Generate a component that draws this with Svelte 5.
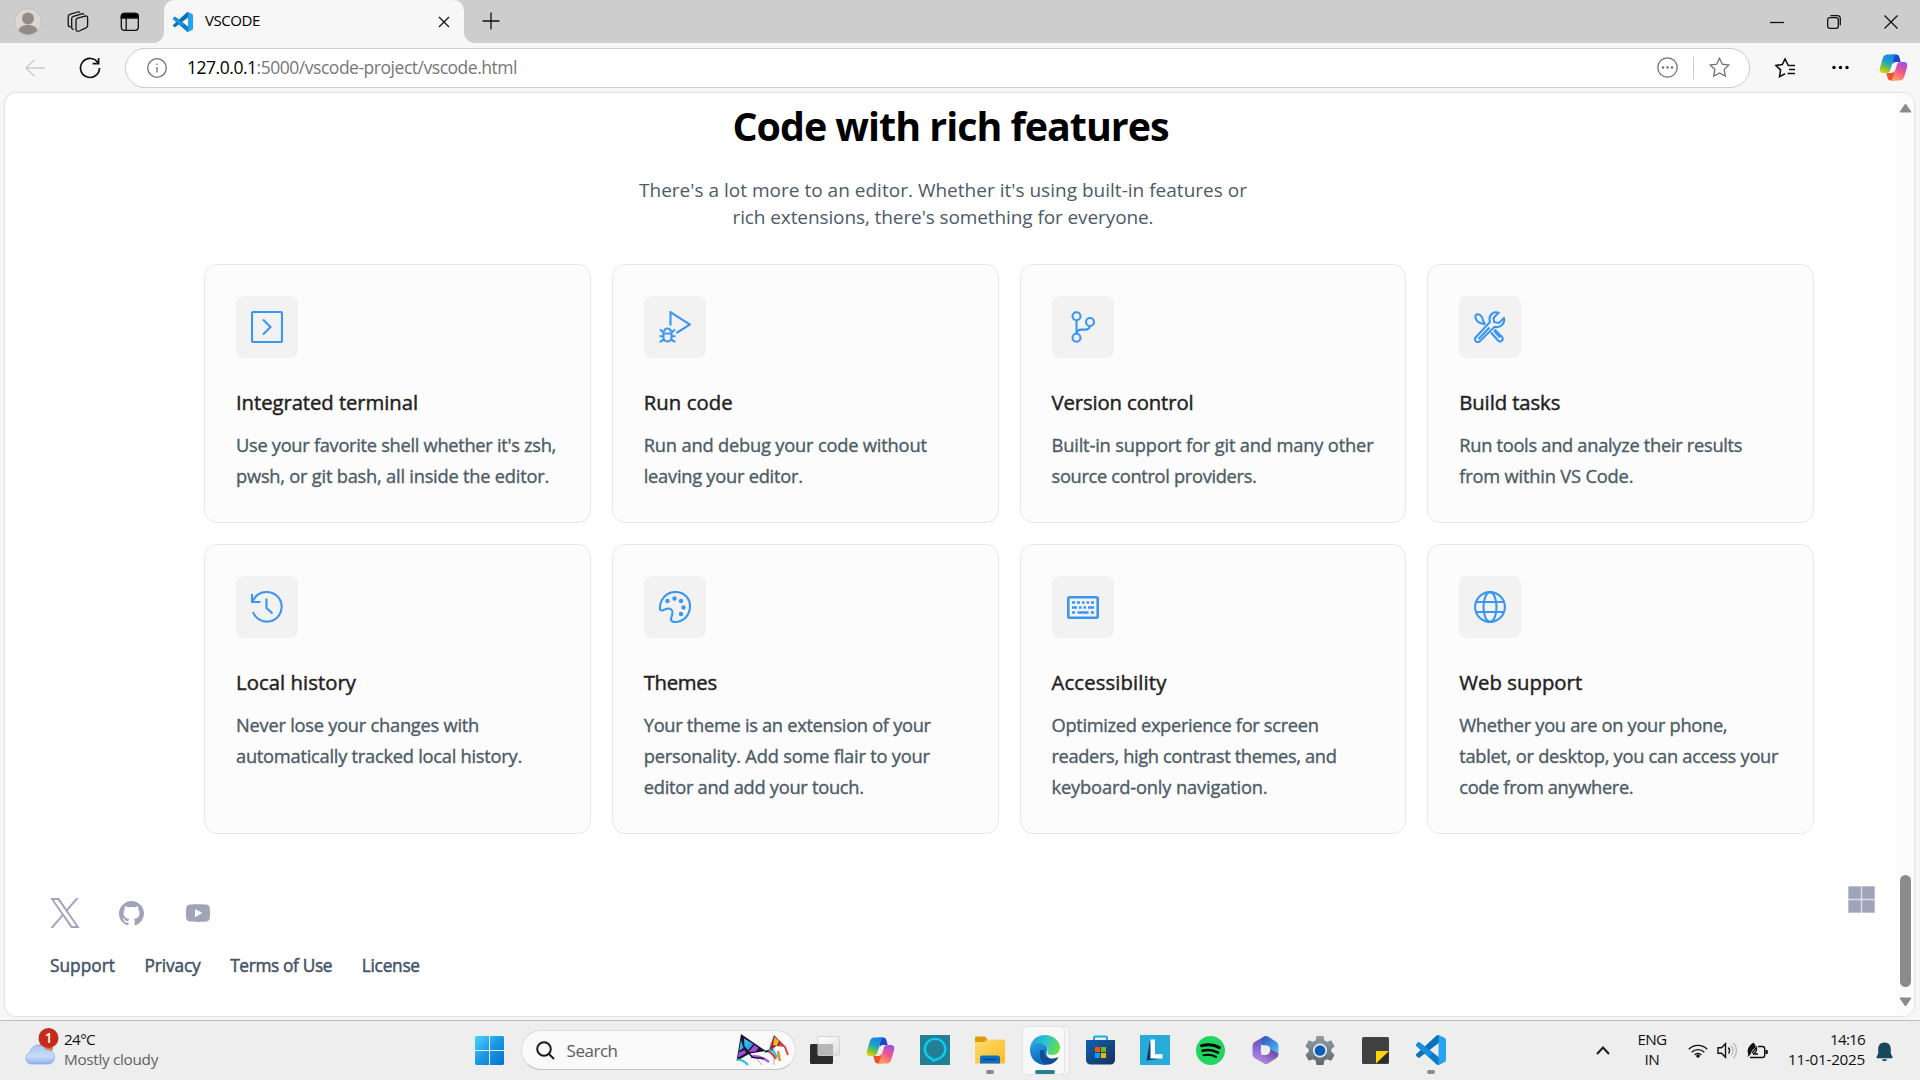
<script>
  // Spreads or tightens the letters of a label until it is `width` px wide.
  function fit(node, width) {
    const range = document.createRange();
    range.selectNodeContents(node);
    const natural = range.getBoundingClientRect().width;
    const gap = (width - natural) / node.textContent.length;
    node.style.letterSpacing = gap.toFixed(3) + 'px';
  }

  const features = [
    { icon: 'terminal', title: ['Integrated terminal', 182], lines: [["Use your favorite shell whether it's zsh,", 320], ['pwsh, or git bash, all inside the editor.', 313]] },
    { icon: 'debug', title: ['Run code', 89], lines: [['Run and debug your code without', 283], ['leaving your editor.', 159]] },
    { icon: 'branch', title: ['Version control', 142], lines: [['Built-in support for git and many other', 322], ['source control providers.', 205]] },
    { icon: 'tools', title: ['Build tasks', 101], lines: [['Run tools and analyze their results', 283], ['from within VS Code.', 174]] },
    { icon: 'history', title: ['Local history', 120], lines: [['Never lose your changes with', 243], ['automatically tracked local history.', 286]] },
    { icon: 'palette', title: ['Themes', 73], lines: [['Your theme is an extension of your', 287], ['personality. Add some flair to your', 286], ['editor and add your touch.', 220]] },
    { icon: 'keyboard', title: ['Accessibility', 115], lines: [['Optimized experience for screen', 267], ['readers, high contrast themes, and', 285], ['keyboard-only navigation.', 216]] },
    { icon: 'globe', title: ['Web support', 123], lines: [['Whether you are on your phone,', 268], ['tablet, or desktop, you can access your', 319], ['code from anywhere.', 174]] }
  ];

  const links = [['Support', 65], ['Privacy', 56], ['Terms of Use', 102], ['License', 58]];
</script>

{#snippet vscode(size)}
  <svg width={size} height={size} viewBox="0 0 100 100">
    <path fill="#0b7cc4" d="M96.46 89.2 75.86 99.12C73.47 100.27 70.62 99.79 68.75 97.92L1.3 36.42C-.52 34.76-.51 31.9 1.3 30.25L6.81 25.25C8.3 23.9 10.53 23.8 12.13 25L93.36 86.63C96.09 88.7 100 86.75 100 83.33V83.57C100 85.97 98.62 88.16 96.46 89.2Z" />
    <path fill="#0872b8" d="M96.46 10.8 75.86.88C73.47-.27 70.62.21 68.75 2.08L1.3 63.58C-.52 65.24-.51 68.1 1.3 69.75L6.81 74.75C8.3 76.1 10.53 76.2 12.13 75L93.36 13.37C96.09 11.3 100 13.25 100 16.67V16.43C100 14.03 98.62 11.84 96.46 10.8Z" />
    <path fill="#1b8fdc" d="M1.3 36.42C-.52 34.76-.51 31.9 1.3 30.25L6.81 25.25C8.3 23.9 10.53 23.8 12.13 25L58 60 42 73.5Z" />
    <path fill="#24a3f2" d="M75.86 99.13C73.47 100.27 70.62 99.79 68.75 97.92 71.06 100.22 75 98.59 75 95.33V4.67C75 1.41 71.06-.22 68.75 2.08 70.62.21 73.47-.27 75.86.87L96.46 10.78C98.62 11.82 100 14 100 16.41V83.59C100 86 98.62 88.18 96.46 89.22Z" />
  </svg>
{/snippet}

{#snippet copilot(id)}
  <svg width="29" height="27" viewBox="0 0 29 27">
    <defs>
      <linearGradient id="{id}a" x1="0.6" y1="0" x2="0.2" y2="1">
        <stop offset="0" stop-color="#1784e8" /><stop offset=".4" stop-color="#1aa2c9" /><stop offset=".7" stop-color="#6fc04b" /><stop offset="1" stop-color="#f5d000" />
      </linearGradient>
      <linearGradient id="{id}b" x1="0.8" y1="0" x2="0.3" y2="1">
        <stop offset="0" stop-color="#9a4df2" /><stop offset=".5" stop-color="#f0568c" /><stop offset="1" stop-color="#ffa45e" />
      </linearGradient>
    </defs>
    <path fill="#1d46cf" d="M13 .5h4.200c1.800 0 2.700 1 3.200 2.700l1.300 4.800h-5c-1.800 0-2.500 1-3 2.400z" />
    <path fill="#f0512b" d="M16 26.500h-4.200c-1.800 0-2.700-1-3.200-2.700l-1.300-4.800h5c1.800 0 2.500-1 3-2.400z" />
    <path fill="url(#{id}a)" d="M8.500.5h9.300c-1.500.3-2.200 1.400-2.700 3l-3.900 12.600c-.6 2-1.700 2.900-3.700 2.900H4.300C1 19 .2 16.600 1 13.500L3.700 4.400C4.500 1.800 5.900.5 8.500.5z" />
    <path fill="url(#{id}b)" d="M20.500 26.500h-9.300c1.500-.3 2.200-1.400 2.700-3l3.900-12.600c.6-2 1.700-2.900 3.700-2.900h3.200c3.300 0 4.100 2.400 3.300 5.500l-2.700 9.100c-.8 2.600-2.200 3.900-4.800 3.900z" />
  </svg>
{/snippet}

{#snippet featureIcon(name)}
  <svg class="line" width="32" height="32" viewBox="0 0 32 32">
    {#if name === 'terminal'}
      <rect x="1" y="1" width="30" height="30" rx="1.500" /><path d="M12 8.500 19.500 16 12 23.500" />
    {:else if name === 'debug'}
      <path d="M11.500 14.500V1.200L31 13.500 17.500 22" />
      <path d="M4.500 22.500h8v4a4 4 0 0 1-8 0zM5 21a3.500 3.500 0 0 1 7 0M1 18.500l3.500 3M16 18.500l-3.500 3M.5 25.300h4M12.500 25.300h4M1.500 31.500v-1l3.500-2M15.500 31.500v-1l-3.500-2" />
    {:else if name === 'branch'}
      <circle cx="9.500" cy="5.200" r="4" /><circle cx="9.500" cy="26.800" r="4" /><circle cx="23" cy="11" r="4" />
      <path d="M9.500 9.200v13.600M23 15c-.6 3-2.600 3.600-5 3.600h-3.500c-3 0-4.500 1.400-5 4" />
    {:else if name === 'tools'}
      <path d="M29.800 7.200 25 12l-4.800-.8L19.500 7l5-5.200c-4-1.800-9 1.200-9 6.200 0 1.200.2 2 .5 3L1.800 26.300c-2.300 2.600 1.300 6.400 4 4L20.500 15.800c6 1.600 11-3.600 9.300-8.600zM15.500 16.500 4.500 28" />
      <path d="M2 3.500C5 2.500 8.500 4.500 9 9.500l2 4M2 3.500C.5 6.500 2.500 11 6.500 12l4.500 1.500M17 21.500l7 8c2.300 2.400 6-.5 4.200-3.300L20.500 18.500M20 19.500l6 7" />
    {:else if name === 'history'}
      <path d="M1 3v8h8.500M1.600 10.500C4 4.700 9.500 1 16 1a14.800 14.800 0 1 1-14 20M15.500 7.500V17l6 5.500" />
    {:else if name === 'palette'}
      <path d="M1 18.500C.5 9 7 1 16.500 1 25.500 1 31 7.500 31 15c0 8.500-6 16-15 16-3 0-4.500-1.500-3.800-4 .8-3 1.800-4.500 1-7-.8-2.500-3.700-3-6.200-2-1.700.7-2.500 1.500-4 1.500-1.200 0-1.900-.3-2-1z" />
      <g class="solid"><circle cx="8.500" cy="10" r="2.200" /><circle cx="15.500" cy="7.500" r="2.200" /><circle cx="22" cy="10" r="2.200" /><circle cx="24.500" cy="16.500" r="2.200" /><circle cx="22" cy="23" r="2.200" /></g>
    {:else if name === 'keyboard'}
      <rect x="1.300" y="6.300" width="29.400" height="20.400" rx="1.500" stroke-width="2.600" />
      <path stroke-width="2.500" d="M5 11.500h3M10 11.500h3M15 11.500h2.500M19.500 11.500h2.500M24 11.500h3M5 16.500h5M12 16.500h2.500M16.500 16.500h2.500M21 16.500h6M5 21.500h3M10.500 21.500h11M24 21.500h3" />
    {:else}
      <circle cx="16" cy="16" r="14.900" /><ellipse cx="16" cy="16" rx="6.500" ry="14.900" /><path d="M2 11h28M2 21h28" />
    {/if}
  </svg>
{/snippet}

<div class="screen">
  <header class="tabs">
    <div class="tab-tools">
      <svg width="28" height="28" viewBox="0 0 28 28">
        <circle cx="14" cy="14" r="13.500" fill="#dbd8d4" stroke="#c2bfbb" />
        <circle cx="14" cy="10.500" r="6" fill="#918c88" /><path d="M4.500 22.500c1-4 5-5.500 9.500-5.500s8.500 1.500 9.500 5.500a13 13 0 0 1-19 0z" fill="#918c88" />
      </svg>
      <svg class="ink" width="22" height="22" viewBox="0 0 22 22">
        <path d="M9 9.200c0-1.200.6-1.800 1.700-2.100l7.300-2c1.600-.4 2.600.3 2.600 1.800v7.700c0 1.200-.6 1.900-1.700 2.200l-6.700 3.200C10.200 20.700 9 20 9 18.300z" />
        <path d="M6.800 18.300c-1.500.2-2.100-.7-2.100-2V7.500c0-1.200.6-1.900 1.700-2.200l8.400-2.500c1-.3 1.800 0 2.200.7M3.800 15.700C2 16 1.200 15.200 1.200 13.500V5.600c0-1.200.6-1.900 1.700-2.200L10.500 1c1-.3 2 0 2.400.6" />
      </svg>
      <svg class="ink" width="20" height="20" viewBox="0 0 20 20">
        <rect x="1.300" y="1.300" width="17" height="17" rx="3" /><path fill="#000" d="M1.300 6V4.300a3 3 0 0 1 3-3h11a3 3 0 0 1 3 3V6z" /><path d="M6.200 6v12" />
      </svg>
    </div>
    <div class="tab">
      {@render vscode(20)}
      <span class="tab-name"><span use:fit={55}>VSCODE</span></span>
      <svg class="ink" width="12" height="12" viewBox="0 0 12 12"><path d="m1 1 10 10M11 1 1 11" /></svg>
    </div>
    <svg class="ink plus" width="18" height="18" viewBox="0 0 18 18"><path d="M9 .5v17M.5 9h17" /></svg>
    <div class="window-buttons">
      <svg class="ink" width="14" height="14" viewBox="0 0 14 14"><path d="M0 7.500h14" /></svg>
      <svg class="ink" width="14" height="14" viewBox="0 0 14 14"><rect x=".7" y="2.700" width="10.600" height="10.600" rx="2" /><path d="M3.500.7h7.300a2.500 2.500 0 0 1 2.500 2.500v7" /></svg>
      <svg class="ink" width="14" height="14" viewBox="0 0 14 14"><path d="m.5.5 13 13M13.500.5l-13 13" /></svg>
    </div>
  </header>

  <div class="toolbar">
    <svg class="back" width="20" height="18" viewBox="0 0 20 18"><path d="M20 9H1.500M9.500.8 1 9l8.500 8.200" /></svg>
    <svg class="reload" width="22" height="22" viewBox="0 0 22 22"><path d="M19.300 6.300A9.500 9.500 0 1 0 20.500 11M19.600 1v5.700h-6" /></svg>
    <div class="address">
      <svg class="gray" width="20" height="20" viewBox="0 0 20 20"><circle cx="10" cy="10" r="9.300" /><path d="M10 9v5.500M10 5.400v1.700" /></svg>
      <span class="url" use:fit={330}><b>127.0.0.1</b>:5000/vscode-project/vscode.html</span>
      <svg class="gray" width="21" height="21" viewBox="0 0 21 21"><circle cx="10.500" cy="10.500" r="9.700" /><path class="dots" d="M6 10.500h.01M10.500 10.500h.01M15 10.500h.01" /></svg>
      <i class="divider"></i>
      <svg class="gray" width="21" height="21" viewBox="0 0 21 21"><path d="m10.500 1.300 2.800 5.900 6.500.9-4.700 4.500 1.200 6.500-5.800-3.100-5.800 3.100 1.200-6.500L1.200 8.100l6.500-.9z" /></svg>
    </div>
    <svg class="ink star-list" width="21" height="20" viewBox="0 0 21 20"><path d="M13 7 10 1 7.300 6.600 1 7.500l4.600 4.400-1 6.700L10 15.700M12.500 7.500H20M14 11.500h6M12.500 15.500H20" /></svg>
    <svg class="more" width="17" height="5" viewBox="0 0 17 5"><circle cx="2" cy="2.500" r="1.700" /><circle cx="8.500" cy="2.500" r="1.700" /><circle cx="15" cy="2.500" r="1.700" /></svg>
    {@render copilot('top')}
  </div>

  <main class="page">
    <div class="content">
      <h1><span use:fit={436}>Code with rich features</span></h1>
      <p class="lead">
        <span use:fit={608}>There's a lot more to an editor. Whether it's using built-in features or</span><br />
        <span use:fit={421}>rich extensions, there's something for everyone.</span>
      </p>
      <section class="grid">
        {#each features as f}
          <article class="card">
            <div class="badge">{@render featureIcon(f.icon)}</div>
            <h2><span use:fit={f.title[1]}>{f.title[0]}</span></h2>
            <p>
              {#each f.lines as l}<span class="row"><span use:fit={l[1]}>{l[0]}</span></span>{/each}
            </p>
          </article>
        {/each}
      </section>
      <footer>
        <div>
          <div class="social">
            <svg width="30" height="30" viewBox="0 0 1200 1227"><path d="M714.163 519.284L1160.890 0H1055.030L667.137 450.887L357.328 0H0L468.492 681.821L0 1226.370H105.866L515.491 750.218L842.672 1226.370H1200L714.137 519.284ZM569.165 687.828L521.697 619.934L144.011 79.694H306.615L611.412 515.685L658.880 583.579L1055.080 1150.300H892.476L569.165 687.854Z" /></svg>
            <svg width="25" height="25" viewBox="0 0 16 16"><path d="M8 0C3.580 0 0 3.580 0 8c0 3.540 2.290 6.530 5.470 7.590.4.070.55-.17.55-.38 0-.19-.01-.82-.01-1.490-2.010.37-2.530-.49-2.690-.94-.09-.23-.48-.94-.82-1.130-.28-.15-.68-.52-.01-.53.63-.01 1.080.58 1.230.82.72 1.210 1.870.87 2.330.66.07-.52.28-.87.51-1.070-1.780-.2-3.640-.89-3.640-3.950 0-.87.31-1.590.82-2.150-.08-.2-.36-1.020.08-2.120 0 0 .67-.21 2.200.82.64-.18 1.320-.27 2-.27s1.360.09 2 .27c1.530-1.040 2.200-.82 2.200-.82.44 1.100.16 1.920.08 2.120.51.56.82 1.270.82 2.150 0 3.070-1.870 3.750-3.650 3.950.29.25.54.73.54 1.480 0 1.070-.01 1.930-.01 2.200 0 .21.15.46.55.38A8.010 8.010 0 0 0 16 8c0-4.420-3.580-8-8-8z" /></svg>
            <svg width="24" height="18" viewBox="0 0 24 18"><path fill-rule="evenodd" d="M4 .5C8 0 16 0 20 .5c2.500.3 3.500 1.200 3.800 3.500.3 3 .3 7 0 10-.3 2.300-1.300 3.200-3.800 3.500-4 .5-12 .5-16 0C1.500 17.200.5 16.300.2 14c-.3-3-.3-7 0-10C.5 1.700 1.500.8 4 .5zM9 5v8.200L16.200 9z" /></svg>
          </div>
          <nav>{#each links as l}<a href="#top"><span use:fit={l[1]}>{l[0]}</span></a>{/each}</nav>
        </div>
        <svg class="ms" width="27" height="27" viewBox="0 0 27 27"><path fill="#dcdee6" d="M0 0h27v27H0z" /><path d="M.5.500h12.300v12.300H.500zM14.200.500h12.300v12.300H14.200zM.500 14.200h12.300v12.300H.500zM14.200 14.200h12.300v12.300H14.200z" /></svg>
      </footer>
    </div>
    <div class="scrollbar">
      <svg width="13" height="10" viewBox="0 0 13 10"><path d="M6.500 1 12 9H1z" /></svg>
      <div class="thumb"></div>
      <svg width="13" height="10" viewBox="0 0 13 10"><path d="M1 1h11L6.500 9z" /></svg>
    </div>
  </main>

  <div class="taskbar">
    <div class="weather">
      <svg width="36" height="38" viewBox="0 0 36 38">
        <defs><linearGradient id="cloud" x1="0" y1="0" x2="0" y2="1"><stop offset="0" stop-color="#a9c5f5" /><stop offset=".6" stop-color="#c9dcfa" /><stop offset="1" stop-color="#8eb0ee" /></linearGradient></defs>
        <circle cx="22" cy="19" r="7" fill="#f27314" />
        <path fill="url(#cloud)" stroke="#83a6e6" stroke-width=".7" d="M6.500 36A6 6 0 0 1 6 24.500C7 19.500 11 17 14.500 17c3.500 0 6 1.800 7.500 4.800 4-.8 8.500 2 8.500 7.200 0 4-2.500 7-6.500 7z" />
        <circle cx="24.500" cy="10" r="10" fill="#c42b1c" />
        <text x="24.500" y="15" text-anchor="middle" font-size="13.500" font-weight="600" fill="#fff">1</text>
      </svg>
      <div class="stack"><span use:fit={31}>24°C</span><span class="soft" use:fit={94}>Mostly cloudy</span></div>
    </div>

    <div class="apps">
      <div class="app">
        <svg width="29" height="29" viewBox="0 0 29 29">
          <defs><linearGradient id="win" x1="0" y1="0" x2="1" y2="1"><stop offset="0" stop-color="#4fd3ff" /><stop offset=".5" stop-color="#1a97e4" /><stop offset="1" stop-color="#0272d2" /></linearGradient></defs>
          <path fill="url(#win)" d="M1 0h13v14H0V1zM15 0h13l1 1v13H15zM0 15h14v14H1l-1-1zM15 15h14v13l-1 1H15z" />
        </svg>
      </div>
      <div class="search">
        <svg class="lens" width="19" height="19" viewBox="0 0 19 19"><circle cx="8" cy="8" r="6.800" /><path d="m13 13 5 5" /></svg>
        <span use:fit={51}>Search</span>
        <svg class="kites" width="54" height="32" viewBox="0 0 54 32">
          <defs><linearGradient id="kite" x1="0" y1="0" x2="1" y2="1"><stop offset="0" stop-color="#35d6f2" /><stop offset=".5" stop-color="#2eaee8" /><stop offset="1" stop-color="#8b3fe0" /></linearGradient></defs>
          <path fill="none" stroke="#aaa" d="m17 20 9 11M38 13v18" />
          <path fill="#17152b" d="M5 0 30 17 14 19.500.500 27z" />
          <path fill="url(#kite)" d="M8 4.500 17.500 10 12 16.500 8.500 12z" /><path fill="#2bb5dc" d="m5 6 2.500 8L3 17z" />
          <path fill="#a64be8" d="m18.500 11 4 3-3 3.500-7 .5zM2.600 18.500l6-2.500 1.500 3-8 4.500z" />
          <path fill="none" stroke="#27bfe8" stroke-width="2" d="M1 26c4-1 7 1 11 5M29 17c4-1 6 3 12 6" />
          <path fill="none" stroke="#b45ae8" stroke-width="2.500" d="M15 23c6-2 11 0 18 5" /><path fill="none" stroke="#17152b" stroke-width="1.500" d="M13 19l3 4c5 2 9 0 12 2M29 18l8-3" />
          <path fill="#8c2440" d="M38 1 50 13l-9-1-8 4z" /><path fill="#f6b51f" d="M38.500 3 43 7l-2 5-4-1z" /><path fill="#e8413a" d="m44 8 4 4h-5zM35 8l1 4-2 2z" />
          <path fill="none" stroke="#e8413a" stroke-width="2" d="M49 13l3 8M33 17c3 3 5 5 7 8" /><path fill="none" stroke="#f08c1f" stroke-width="2.500" d="M42 17c1 4 1 7 2 10" />
          <path fill="none" stroke="#27bfe8" stroke-width="2" d="M33 16c4 0 6 2 8 7" />
        </svg>
      </div>
      <div class="app">
        <svg width="30" height="28" viewBox="0 0 30 28">
          <defs><linearGradient id="tv" x1="0" y1="0" x2="1" y2="1"><stop offset="0" stop-color="#fff" /><stop offset="1" stop-color="#ddd" /></linearGradient></defs>
          <rect y="8" width="23" height="20" rx="1.500" fill="#2b2b2a" /><rect x="8" y=".5" width="21.500" height="19" rx="1" fill="url(#tv)" stroke="#d4d4d4" /><path fill="#b6b6b6" d="M8 8h15v11.500H8z" />
        </svg>
      </div>
      <div class="app">{@render copilot('task')}</div>
      <div class="app">
        <svg width="30" height="30" viewBox="0 0 30 30"><path fill="#257f92" d="M0 0h30v30H0z" /><path fill="none" stroke="#07cdf8" stroke-width="2.400" d="M13.500 25.500c.2-1.200-1.500-1.700-3.500-2.600A10.200 10.200 0 1 1 20 23c-2 .8-3.400 1.500-6.500 2.500z" /></svg>
      </div>
      <div class="app">
        <svg width="30" height="29" viewBox="0 0 30 29">
          <defs><linearGradient id="fold" x1="0" y1="0" x2="1" y2="1"><stop offset="0" stop-color="#ffdc70" /><stop offset="1" stop-color="#fcba25" /></linearGradient></defs>
          <path fill="#dd9a03" d="M0 2a1.500 1.500 0 0 1 1.500-1.500h7c1.300 0 2 .5 2.700 1.300L13 4.500 9 9H0z" /><path fill="url(#fold)" d="M0 6h7.500c1.500 0 2.500-.5 3.300-1.200L12 3.500h16.500A1.500 1.500 0 0 1 30 5v21a1.500 1.500 0 0 1-1.500 1.500h-27A1.500 1.500 0 0 1 0 26z" />
          <path fill="#0a6fc2" d="M5 27.500V22a2.500 2.500 0 0 1 2.500-2.500h15A2.500 2.500 0 0 1 25 22v5.500z" /><path stroke="#083f78" stroke-width="1.300" d="M8.500 23.500h13" />
        </svg>
        <i class="dot"></i>
      </div>
      <div class="app active">
        <svg width="30" height="32" viewBox="0 0 30 32">
          <defs>
            <linearGradient id="e1" x1="0" y1=".2" x2="1" y2=".5"><stop offset="0" stop-color="#1f9fe0" /><stop offset=".5" stop-color="#2fc4cf" /><stop offset="1" stop-color="#66e043" /></linearGradient>
            <linearGradient id="e2" x1="0" y1="0" x2=".3" y2="1"><stop offset="0" stop-color="#2ba0e6" /><stop offset="1" stop-color="#0a66bd" /></linearGradient>
          </defs>
          <path fill="url(#e2)" d="M0 15C1 8 8 7 13 9.500c4 2 5.500 5 4 8-2 3.500 1 6.500 5 8L15.500 31C7 31-.5 25 0 15z" />
          <path fill="#124d94" d="M10.500 16c-1.500 4.500-.5 13 6.500 14.800 5-.3 9-3 11.200-6.800.3-.6-.2-.9-.8-.6-7 3-15 0-12.500-7.200z" />
          <path fill="url(#e1)" d="M0 14.500C1 6 7 1 15 1s15 6 15 12.500C30 18 26.500 21 22.500 21c-3.500 0-6-1.200-5-2.700 1-1.400 1-3-.2-5C13 7 3 8 0 14.500z" />
        </svg>
        <i class="dot on"></i>
      </div>
      <div class="app">
        <svg width="29" height="30" viewBox="0 0 29 30">
          <defs><linearGradient id="bag" x1="0" y1="0" x2="1" y2="1"><stop offset="0" stop-color="#0b62b2" /><stop offset="1" stop-color="#1b2f5c" /></linearGradient></defs>
          <path fill="none" stroke="#17a9ee" stroke-width="2" d="M8 6V3a1.500 1.500 0 0 1 1.500-1.500h10A1.500 1.500 0 0 1 21 3v3" /><path fill="url(#bag)" d="M0 5h29v20a4.500 4.500 0 0 1-4.500 4.500h-20A4.500 4.500 0 0 1 0 25z" />
          <path fill="#f4511e" d="M9 12h5v5H9z" /><path fill="#7db700" d="M15 12h5v5h-5z" /><path fill="#05a4ee" d="M9 18h5v5H9z" /><path fill="#fdb300" d="M15 18h5v5h-5z" />
        </svg>
      </div>
      <div class="app">
        <svg width="30" height="30" viewBox="0 0 30 30"><path fill="#27acd9" d="M0 0h30v30H0z" /><path fill="#12386b" d="m10 5-3.500 20.500L18 24l-6-3z" /><path fill="#fff" d="M10.500 4.500H15v14.800h7.500v4.200h-12z" /></svg>
      </div>
      <div class="app">
        <svg width="29" height="29" viewBox="0 0 29 29"><circle cx="14.500" cy="14.500" r="14.500" fill="#1fd661" /><g fill="none" stroke="#000" stroke-linecap="round"><path stroke-width="3" d="M5.500 9.700c6-1.500 13-1 18 1.900" /><path stroke-width="2.500" d="M6.500 14.700c5-1.300 11-.6 15.500 1.900" /><path stroke-width="2" d="M7.500 19.200c4-.9 9-.4 12.500 1.700" /></g></svg>
      </div>
      <div class="app">
        <svg width="27" height="30" viewBox="0 0 27 30">
          <defs>
            <linearGradient id="m1" x1="0" y1="0" x2="0" y2="1"><stop offset="0" stop-color="#5d4fb5" /><stop offset="1" stop-color="#b183ee" /></linearGradient>
            <linearGradient id="m2" x1="0" y1="0" x2="1" y2="1"><stop offset="0" stop-color="#2d4fc0" /><stop offset="1" stop-color="#55c3f2" /></linearGradient>
            <linearGradient id="m3" x1="0" y1="1" x2="1" y2="0"><stop offset="0" stop-color="#c59af4" /><stop offset="1" stop-color="#5c3c8e" /></linearGradient>
          </defs>
          <path fill="url(#m1)" d="M13 1 2.500 7Q.500 8.300.500 11v8q0 2.500 2 4l2 1.300q4 1.700 6-2.300L9 17.500V12c0-4 2-6 4-11z" />
          <path fill="url(#m2)" d="M12 1.500q2-1 4 0L24.500 7Q26.500 8.300 26.500 11v8L18 14.500V13L9 9.500C9 6 9.500 3 12 1.500z" />
          <path fill="url(#m3)" d="M3.500 23.500q5 1.500 6.500-3.500h4q4-1.500 4-6l8.500 4.500q0 3-2 4.500l-8.500 5.500q-2 1-4 0z" /><circle cx="13.500" cy="15" r="4.800" fill="#eee" />
        </svg>
      </div>
      <div class="app">
        <svg width="30" height="30" viewBox="0 0 30 30">
          <defs><linearGradient id="gear" x1="0" y1="0" x2="0" y2="1"><stop offset="0" stop-color="#919ba3" /><stop offset="1" stop-color="#5d6870" /></linearGradient></defs>
          <path fill="url(#gear)" d="M11.500 1h7l.8 4.300 2.700 1.500 4.200-1.500 3.400 6-3.300 2.900v2.600l3.300 2.900-3.400 6-4.200-1.500-2.700 1.500-.8 4.300h-7l-.8-4.300L8 24.200l-4.200 1.500-3.400-6 3.300-2.900v-2.600L.4 11.300l3.400-6L8 6.800l2.700-1.500z" /><circle cx="15" cy="15.500" r="7" fill="#e6eaed" /><circle cx="15" cy="15.500" r="5.300" fill="#0b5eb5" />
        </svg>
      </div>
      <div class="app">
        <svg width="27" height="27" viewBox="0 0 27 27"><rect width="27" height="27" rx="1.500" fill="#404040" /><path fill="#2e2d2d" d="M14 26 26.500 14v11q0 1-1 1z" /><path fill="#fdd400" d="M14 14h13L14 26.500z" /></svg>
      </div>
      <div class="app">{@render vscode(30)}<i class="dot"></i></div>
    </div>

    <div class="tray">
      <svg class="lens" width="14" height="9" viewBox="0 0 14 9"><path d="M1 8 7 1.500 13 8" /></svg>
      <div class="stack lang"><span use:fit={29}>ENG</span><span use:fit={15}>IN</span></div>
      <svg class="thin wifi" width="20" height="15" viewBox="0 0 20 15"><path d="M.8 6.200a13 13 0 0 1 18.400 0M3.700 9.200a9 9 0 0 1 12.600 0M6.600 11.900a5 5 0 0 1 6.800 0" /><circle cx="10" cy="13" r="1.800" fill="#111" stroke="none" /></svg>
      <svg class="thin speaker" width="21" height="17" viewBox="0 0 21 17"><path d="M1 5.700h3.500l4-4v13.600l-4-4H1zM11.500 5.500c1.300 1.800 1.300 4.200 0 6" /><path stroke="#bbb" d="M14 3.500c2.500 3 2.500 7 0 10M16.500 1c4 4.500 4 10.500 0 15" /></svg>
      <svg class="thin battery" width="21" height="18" viewBox="0 0 21 18"><path d="M11 4.500h4.500q2.200 0 2.200 2.200v6.600q0 2.200-2.200 2.200H3" /><path fill="#111" stroke="none" d="M18.500 8H20q.8 0 .8.800v2.400q0 .8-.8.800h-1.500zM6.500.5q2 2 2.300 4.500L5 8.500 3.500 12.500.5 15l.8-3C-.500 9 1 4 6.500.500z" /><path stroke-width="1.300" d="M5 11 9.500 5.500q.5 5-3.500 6.500h5" /></svg>
      <div class="stack clock"><span use:fit={35}>14:16</span><span use:fit={77}>11-01-2025</span></div>
      <svg class="bell" width="17" height="20" viewBox="0 0 17 20"><path fill="#17495a" d="M8.500.5c4 0 6.300 2.800 6.300 6.500v4.500l1.700 3.500c.3.700 0 1.200-.7 1.200H1.200c-.7 0-1-.5-.7-1.200l1.700-3.500V7C2.200 3.300 4.500.5 8.500.5zM5.800 17.200h5.400q-.7 2-2.700 2t-2.700-2z" /></svg>
    </div>
  </div>
</div>

<style>
  :global(body) { margin: 0; overflow: hidden; }
  .screen { width: 1920px; height: 1080px; display: flex; flex-direction: column; background: #f7f7f7; font-family: 'Open Sans', 'Noto Sans', sans-serif; color: #000; overflow: hidden; }
  svg { display: block; flex: none; }
  span { white-space: nowrap; }
  .ink { fill: none; stroke: #111; stroke-width: 1.3; }

  .tabs { height: 43px; flex: none; background: #cdcdcd; display: flex; align-items: center; }
  .tab-tools { box-sizing: border-box; width: 164px; height: 43px; padding-left: 14px; display: flex; align-items: center; gap: 25px; }
  .tab-tools svg:last-child { margin-left: 6px; }
  .tab { position: relative; box-sizing: border-box; width: 300px; height: 43px; padding: 0 14px 0 9px; display: flex; align-items: center; background: #f7f7f7; border-radius: 10px 10px 0 0; }
  /* concave feet on both sides of the active tab */
  .tab::before, .tab::after { content: ''; position: absolute; bottom: 0; width: 10px; height: 10px; }
  .tab::before { left: -10px; background: radial-gradient(circle at 0 0, #cdcdcd 9.5px, #f7f7f7 10px); }
  .tab::after { right: -10px; background: radial-gradient(circle at 100% 0, #cdcdcd 9.5px, #f7f7f7 10px); }
  .tab-name { margin-left: 12px; flex: 1; font-size: 15px; padding-bottom: 4px; }
  .plus { margin: 0 0 2px 18px; }
  .window-buttons { margin-left: auto; padding-right: 22px; display: flex; gap: 43px; }

  .toolbar { height: 49px; flex: none; display: flex; align-items: center; padding-left: 25px; }
  .back { fill: none; stroke: #ccc; stroke-width: 1.4; }
  .reload { fill: none; stroke: #111; stroke-width: 1.7; margin-left: 34px; }
  .address { box-sizing: border-box; width: 1625px; height: 40px; margin-left: 24px; padding: 0 19px 0 21px; border: 1px solid #cbcbcb; border-radius: 20px; background: #fff; display: flex; align-items: center; }
  .gray { fill: none; stroke: #717171; stroke-width: 1.3; }
  .dots { stroke-width: 2.6; stroke-linecap: round; }
  .url { margin: 0 auto 0 20px; padding-bottom: 2px; font-size: 17.5px; color: #777; }
  .url b { font-weight: 400; color: #000; }
  .divider { width: 1px; height: 22px; background: #ccc; margin: 0 15px; }
  .star-list { margin-left: 25px; stroke-width: 1.6; }
  .more { margin: 0 30px 0 36px; }

  .page { box-sizing: border-box; width: 1911px; height: 925px; margin: 0 4px; border: 1px solid #e3e3e3; border-radius: 12px; background: #fff; display: flex; box-shadow: 0 0 2px #0001; overflow: hidden; }
  .content { width: 1891px; flex: none; display: flex; flex-direction: column; }
  h1 { margin: 5px 0 0; font-size: 39.4px; font-weight: 700; line-height: 56px; text-align: center; }
  .lead { margin: 23px 0 0; padding-right: 15px; font-size: 19px; line-height: 27px; color: #4d5a69; text-align: center; }
  .grid { margin: 33px 0 0 199px; width: 1610px; display: grid; grid-template-columns: repeat(4, 1fr); grid-template-rows: 259px 290px; gap: 21px; }
  .card { box-sizing: border-box; border: 1px solid #e7e7e7; border-radius: 13px; background: #fcfcfc; padding: 31px; }
  .badge { width: 62px; height: 62px; border-radius: 8px; background: #f2f2f2; display: grid; place-items: center; }
  .line { fill: none; stroke: #3b95f3; stroke-width: 2.1; }
  .solid { fill: #3b95f3; stroke: none; }
  h2 { margin: 29px 0 0; font-size: 20.3px; line-height: 30px; font-weight: 400; color: #222; -webkit-text-stroke: 0.45px #222; }
  .card p { margin: 11.5px 0 0; font-size: 18.3px; line-height: 31.2px; color: #4c5b66; -webkit-text-stroke: 0.35px #4c5b66; }
  .row { display: block; }

  footer { margin: 52px 32px 0 45px; display: flex; justify-content: space-between; align-items: flex-start; fill: #9fa4b8; }
  .social { margin-top: 12px; height: 30px; display: flex; align-items: center; }
  .social svg:nth-child(2) { margin: 0 42px 0 39px; }
  .ms { margin-right: -11px; }
  nav { margin-top: 26px; display: flex; gap: 29.6px; }
  nav a { font-size: 17.3px; line-height: 24px; color: #44546a; text-decoration: none; -webkit-text-stroke: 0.5px #44546a; }

  .scrollbar { width: 18px; background: #fcfcfc; display: flex; flex-direction: column; align-items: center; padding: 10px 0 9px; fill: #8b8b8b; stroke: #8b8b8b; stroke-linejoin: round; }
  .thumb { width: 11px; height: 112px; margin: auto 0 10px; border-radius: 6px; background: #8b8b8b; }

  .taskbar { height: 59px; margin-top: auto; flex: none; border-top: 1px solid #bfbfbf; background: #eee; display: flex; align-items: center; }
  .weather { width: 461.5px; display: flex; align-items: center; padding-left: 24px; box-sizing: border-box; gap: 4px; }
  .weather svg { margin-bottom: 7px; }
  .stack { display: flex; flex-direction: column; font-size: 15.3px; line-height: 20.5px; color: #111; margin-bottom: 3px; }
  .soft { color: #616161; }
  .apps { display: flex; align-items: center; height: 59px; padding-bottom: 1px; box-sizing: border-box; }
  .app { width: 55.05px; height: 48px; position: relative; display: grid; place-items: center; }
  .app:nth-child(3) { margin-left: 2px; }
  .dot { position: absolute; left: 23.5px; bottom: 0; width: 8px; height: 4px; border-radius: 2px; background: #8a8a8a; }
  .dot.on { left: 17.5px; width: 20px; background: #25808f; }
  .active::before { content: ''; position: absolute; left: 4px; top: 0; width: 41px; height: 47px; border: 1px solid #e4e4e4; border-radius: 5px; background: #f8f8f8; box-shadow: 5px 0 0 -1px #f5f5f5, 5px 0 0 #e2e2e2; }
  .active svg { position: relative; }
  .search { box-sizing: border-box; width: 275px; height: 40px; margin-left: 4px; padding: 0 5px 0 14px; border: 1px solid #dcdcdc; border-bottom-color: #c4c4c4; border-radius: 20px; background: #fafafa; display: flex; align-items: center; color: #5c5c5c; font-size: 17px; }
  .lens { fill: none; stroke: #1c1c1c; stroke-width: 2; }
  .search span { margin-left: 12px; }
  .kites { margin-left: auto; }
  .tray { margin-left: auto; display: flex; align-items: center; padding-right: 27px; }
  .thin { fill: none; stroke: #111; stroke-width: 1.4; }
  .lang { align-items: center; width: 60px; margin-left: 12px; margin-right: 6px; }
  .wifi { margin-right: 9px; }
  .speaker { margin-right: 9px; }
  .clock { width: 97px; align-items: flex-end; }
  .bell { margin: 2px 0 0 11px; }
</style>
